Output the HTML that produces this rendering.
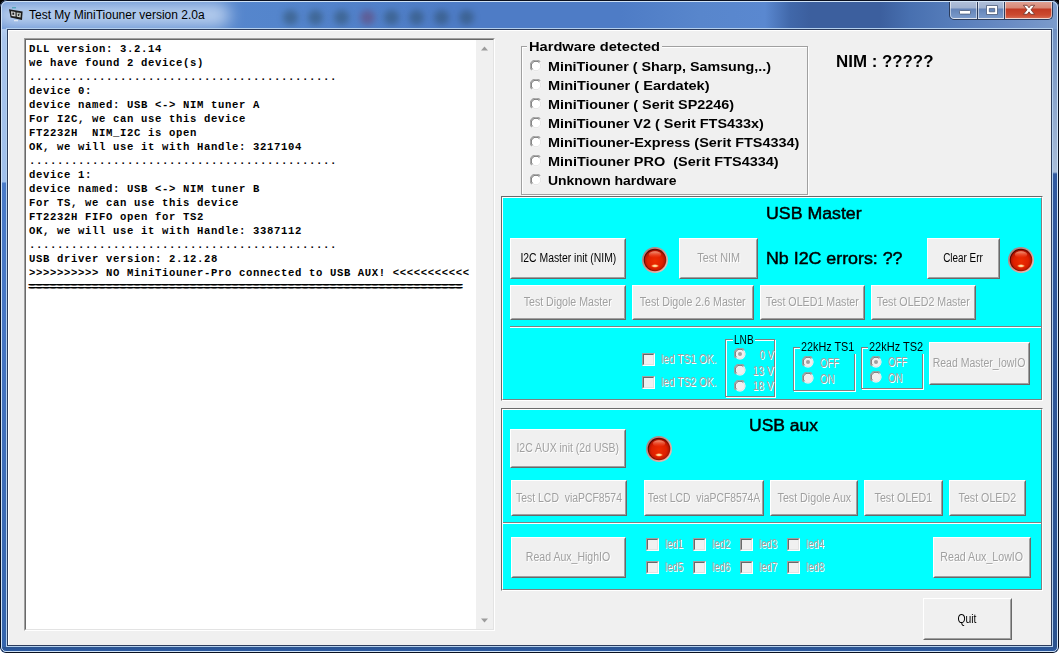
<!DOCTYPE html>
<html lang="en">
<head>
<meta charset="utf-8">
<title>Test My MiniTiouner version 2.0a</title>
<style>
html,body{margin:0;padding:0;}
body{width:1059px;height:653px;overflow:hidden;background:linear-gradient(#000 0,#000 50%,#fff 50%,#fff 100%);font-family:"Liberation Sans",sans-serif;}
#win{position:absolute;left:0;top:0;width:1059px;height:653px;overflow:hidden;border-radius:7px 7px 6px 6px;
 background:linear-gradient(90deg,#5d8bd0 0,#5485cc 280px,#4e7cc6 450px,#4e7cc6 620px,#5886cc 700px,#5a88d0 765px,#4168aa 790px,#3c5f9e 810px,#3c5f9e 880px,#4870b0 910px,#557cba 950px,#6a8cc4 1010px,#7c9ccc 1059px);}
#win .edge{position:absolute;left:0;top:0;right:0;bottom:0;border:1px solid #0a1020;border-radius:7px 7px 6px 6px;box-sizing:border-box;z-index:5;}
#win .edge2{position:absolute;left:1px;top:1px;right:1px;bottom:1px;border:1px solid #cfe2f6;border-radius:6px 6px 5px 5px;box-sizing:border-box;z-index:5;}
#sideL{position:absolute;left:2px;top:29px;width:4px;height:619px;background:linear-gradient(#a9c5ed 0,#9fbfeb 153px,#4a7bc9 154px,#4676c4 300px,#3464ac 619px);}
#sideR{position:absolute;left:1053px;top:29px;width:4px;height:619px;background:linear-gradient(#6f8fc0 0,#a9bdd9 143px,#31599f 145px,#2a528e 619px);}
#sideB{position:absolute;left:2px;top:647px;width:1055px;height:4px;background:linear-gradient(#2a528e,#2c5aa2);}
#glow{position:absolute;left:-6px;top:3px;width:236px;height:24px;border-radius:12px;background:rgba(236,244,255,.66);filter:blur(8px);}
.blob{position:absolute;top:10px;width:15px;height:15px;border-radius:50%;background:rgba(30,55,60,.36);filter:blur(3px);}
#icon{position:absolute;left:8px;top:7px;width:16px;height:16px;}
#title{position:absolute;left:29px;top:8px;font-size:12px;line-height:15px;color:#000;white-space:nowrap;}
#capb{position:absolute;left:949px;top:0;width:104px;height:20px;box-sizing:border-box;border:1px solid #2b3c5c;border-top:none;border-radius:0 0 5px 5px;overflow:hidden;}
#capb .cb{position:absolute;top:0;height:19px;box-sizing:border-box;border:1px solid rgba(255,255,255,.55);border-top:none;}
#capb .mn{left:0;width:27px;background:linear-gradient(#b4c2da 0,#a0b2d0 8px,#6484b8 9px,#7c9ccc 19px);border-radius:0 0 0 4px;}
#capb .mx{left:28px;width:26px;background:linear-gradient(#b4c2da 0,#a0b2d0 8px,#6484b8 9px,#7c9ccc 19px);}
#capb .cl{left:55px;width:47px;background:linear-gradient(#e2a89c 0,#d88876 8px,#c23a24 9px,#cc4a30 15px,#d8705a 19px);border-radius:0 0 4px 0;}
#capb .sep{position:absolute;top:0;width:1px;height:19px;background:#2b3c5c;}
#client{position:absolute;left:8px;top:30px;width:1043px;height:615px;background:#f0f0f0;box-shadow:inset 1px 1px 0 #fff;}
#cframe{position:absolute;left:6px;top:28px;width:1047px;height:619px;box-sizing:border-box;border:1px solid #b4d0ee;}
#cframe i{position:absolute;left:0;top:0;right:0;bottom:0;border:1px solid #2c3c5c;}
.abs{position:absolute;}
/* memo */
#memo{position:absolute;left:16px;top:8px;width:471px;height:593px;box-sizing:border-box;background:#fff;
 border:1px solid;border-color:#a0a0a0 #fff #fff #a0a0a0;}
#memo .in{position:absolute;left:0;top:0;right:0;bottom:0;border:1px solid;border-color:#696969 #e3e3e3 #e3e3e3 #696969;}
#memo pre{position:absolute;left:4px;top:3px;margin:0;font-family:"Liberation Mono",monospace;font-weight:bold;font-size:10.6px;letter-spacing:0.64px;line-height:14px;color:#000;}
#sb{position:absolute;right:1px;top:1px;bottom:1px;width:17px;background:#f0f0f0;}
/* classic button */
.btn{position:absolute;box-sizing:border-box;background:#f0f0f0;border:1px solid;border-color:#fff #696969 #696969 #fff;
 font-size:12px;color:#000;text-align:center;white-space:nowrap;}
.btn::after{content:"";position:absolute;left:0;top:0;right:0;bottom:0;border:1px solid;border-color:#f0f0f0 #a0a0a0 #a0a0a0 #f0f0f0;}
.btn>span{position:absolute;left:-40px;right:-40px;line-height:14px;}
.btn.dis{color:#a0a0a0;text-shadow:1px 1px 0 #fff;}
/* panel */
.panel{position:absolute;box-sizing:border-box;background:#00ffff;border:1px solid;border-color:#696969 #fff #fff #696969;}
.panel::after{content:"";position:absolute;left:0;top:0;right:0;bottom:0;border:1px solid;border-color:#fff #808080 #808080 #fff;pointer-events:none;}
.hdiv{position:absolute;height:0;border-top:1px solid #808080;border-bottom:1px solid #fff;}
.big{position:absolute;font-size:16px;line-height:20px;color:#000;white-space:nowrap;-webkit-text-stroke:0.45px #000;}
.led{position:absolute;width:26px;height:26px;}
/* group box */
.gb{position:absolute;box-sizing:border-box;border:1px solid #a0a0a0;box-shadow:1px 1px 0 #fff, inset 1px 1px 0 #fff;}
.gbl{position:absolute;white-space:nowrap;color:#000;}
.rad{position:absolute;width:12px;height:12px;}
.chk{position:absolute;width:13px;height:13px;box-sizing:border-box;background:#f0f0f0;border:1px solid;border-color:#a0a0a0 #fff #fff #a0a0a0;}
.chk::after{content:"";position:absolute;left:0;top:0;right:0;bottom:0;border:1px solid;border-color:#696969 #e3e3e3 #e3e3e3 #696969;}
.dl{position:absolute;font-size:12px;line-height:13px;color:#a0a0a0;text-shadow:1px 1px 0 #fff;white-space:nowrap;}
.hw{position:absolute;font-size:13px;font-weight:bold;line-height:16px;color:#000;white-space:nowrap;}
.hwl{font-size:13px;font-weight:bold;line-height:16px;background:#f0f0f0;padding:0 2px;}
.gbl.c{font-size:12px;line-height:13px;background:#00ffff;padding:0 1px;}
.gb.c{border-color:#808080;}
.nim{font-size:16px;font-weight:bold;line-height:20px;color:#000;white-space:nowrap;}
.sx{display:inline-block;white-space:nowrap;}
.eq{text-shadow:1px 0 0 #000,-1px 0 0 #000;}
</style>
</head>
<body>
<div id="win">
 <div class="edge"></div><div class="edge2"></div>
 <div id="sideL"></div><div id="sideR"></div><div id="sideB"></div>
 <div id="glow"></div>
 <div class="blob" style="left:283px"></div><div class="blob" style="left:308px"></div><div class="blob" style="left:334px"></div><div class="blob" style="left:360px;background:rgba(120,30,60,.34)"></div><div class="blob" style="left:384px"></div><div class="blob" style="left:409px"></div><div class="blob" style="left:434px"></div><div class="blob" style="left:459px"></div>
 <svg id="icon" viewBox="0 0 16 16"><path d="M4 .8h4" stroke="#3aa0b0" stroke-width="1"/><path d="M1 2.2 14.6 4.6 14 13 2.6 10.6z" fill="#1c1c1c"/><path d="M3 4.3 7.4 5.1 7.6 9.6 3.6 8.9z" fill="#d8d8d8"/><path d="M8.6 5.4 12.9 6.1 12.6 10.5 8.8 9.8z" fill="#c8ccc4"/><rect x="4.4" y="5.6" width="1.8" height="2.2" fill="#222"/><path d="M9.8 7 11.8 6.6 11 9 10 9z" fill="#333"/><path d="M6 13.6h4" stroke="#dfe8f4" stroke-width="1.2"/></svg>
 <div id="title">Test My MiniTiouner version 2.0a</div>
 <div id="capb"><div class="cb mn"></div><div class="sep" style="left:27px"></div><div class="cb mx"></div><div class="sep" style="left:54px"></div><div class="cb cl"></div>
  <svg style="position:absolute;left:0;top:0" width="104" height="20" viewBox="0 0 104 20">
   <rect x="9.5" y="10.5" width="11" height="3.6" rx=".8" fill="#fff" stroke="#4a5a78" stroke-width=".8"/>
   <path d="M36.5 5.5h11v9h-11z M39.3 8.4v3.4h5.4v-3.4z" fill="#fff" fill-rule="evenodd" stroke="#4a5a78" stroke-width=".8"/>
   <path d="M73.4 5.3h3.8l1.8 2.5 1.8-2.5h3.8l-3.6 4.5 3.6 4.5h-3.8l-1.8-2.5-1.8 2.5h-3.8l3.6-4.5z" fill="#fff" stroke="#6a3028" stroke-width=".8"/>
  </svg>
 </div>
 <div id="cframe"><i></i></div>
 <div id="client">
  <!-- MEMO -->
  <div id="memo"><div class="in"></div><div id="sb"><svg style="position:absolute;left:0;top:0" width="17" height="17" viewBox="0 0 17 17"><path d="M5 10.5 8.5 6.5 12 10.5z" fill="#9c9c9c"/></svg><svg style="position:absolute;left:0;bottom:0" width="17" height="17" viewBox="0 0 17 17"><path d="M5 6.5 8.5 10.5 12 6.5z" fill="#9c9c9c"/></svg></div>
<pre>DLL version: 3.2.14
we have found 2 device(s)
............................................
device 0:
device named: USB &lt;-&gt; NIM tuner A
For I2C, we can use this device
FT2232H  NIM_I2C is open
OK, we will use it with Handle: 3217104
............................................
device 1:
device named: USB &lt;-&gt; NIM tuner B
For TS, we can use this device
FT2232H FIFO open for TS2
OK, we will use it with Handle: 3387112
............................................
USB driver version: 2.12.28
&gt;&gt;&gt;&gt;&gt;&gt;&gt;&gt;&gt;&gt; NO MiniTiouner-Pro connected to USB AUX! &lt;&lt;&lt;&lt;&lt;&lt;&lt;&lt;&lt;&lt;&lt;
<span class="eq">==============================================================</span></pre>
  </div>
  <!-- HW -->
  <svg width="0" height="0" style="position:absolute"><defs><linearGradient id="lr" x1="0" y1="0" x2="1" y2="1"><stop offset="0" stop-color="#9a7878"/><stop offset=".5" stop-color="#d09a94"/><stop offset="1" stop-color="#f4c4bc"/></linearGradient><linearGradient id="ld" x1="0" y1="0" x2="1" y2="1"><stop offset="0" stop-color="#3c0400"/><stop offset=".5" stop-color="#7a0e00"/><stop offset="1" stop-color="#c02408"/></linearGradient><radialGradient id="lb" cx=".5" cy=".55" r=".55"><stop offset="0" stop-color="#ee2c00"/><stop offset=".65" stop-color="#de2000"/><stop offset=".9" stop-color="#b81400"/><stop offset="1" stop-color="#8c0c00"/></radialGradient><linearGradient id="lh" x1="0" y1="0" x2="0" y2="1"><stop offset="0" stop-color="#ffc0a0" stop-opacity=".8"/><stop offset="1" stop-color="#ff5030" stop-opacity="0"/></linearGradient><radialGradient id="ls"><stop offset="0" stop-color="#fffad8"/><stop offset=".55" stop-color="#ffc070" stop-opacity=".95"/><stop offset="1" stop-color="#ff5020" stop-opacity="0"/></radialGradient></defs></svg>
  <div class="gb" style="left:513px;top:16px;width:287px;height:149px"></div>
  <div class="gbl hwl" style="left:519px;top:9px;width:131px"><span class="sx" style="transform:scaleX(1.126);transform-origin:0 50%">Hardware detected</span></div>
  <svg class="rad" style="left:522px;top:30px" viewBox="0 0 12 12"><circle cx="6" cy="6" r="5.5" fill="#fff"/><path d="M1.8 10.2 A5.9 5.9 0 1 1 10.2 1.8" fill="none" stroke="#a0a0a0" stroke-width="1.1"/><circle cx="6" cy="6" r="4.6" fill="#fff"/><path d="M2.6 9.4 A4.8 4.8 0 1 1 9.4 2.6" fill="none" stroke="#696969" stroke-width="1"/><path d="M9.4 2.6 A4.8 4.8 0 0 1 2.6 9.4" fill="none" stroke="#e3e3e3" stroke-width="1"/></svg>
  <div class="hw" style="left:540px;top:29px"><span class="sx" style="transform:scaleX(1.100);transform-origin:0 50%">MiniTiouner ( Sharp, Samsung,..)</span></div>
  <svg class="rad" style="left:522px;top:49px" viewBox="0 0 12 12"><circle cx="6" cy="6" r="5.5" fill="#fff"/><path d="M1.8 10.2 A5.9 5.9 0 1 1 10.2 1.8" fill="none" stroke="#a0a0a0" stroke-width="1.1"/><circle cx="6" cy="6" r="4.6" fill="#fff"/><path d="M2.6 9.4 A4.8 4.8 0 1 1 9.4 2.6" fill="none" stroke="#696969" stroke-width="1"/><path d="M9.4 2.6 A4.8 4.8 0 0 1 2.6 9.4" fill="none" stroke="#e3e3e3" stroke-width="1"/></svg>
  <div class="hw" style="left:540px;top:48px"><span class="sx" style="transform:scaleX(1.120);transform-origin:0 50%">MiniTiouner ( Eardatek)</span></div>
  <svg class="rad" style="left:522px;top:68px" viewBox="0 0 12 12"><circle cx="6" cy="6" r="5.5" fill="#fff"/><path d="M1.8 10.2 A5.9 5.9 0 1 1 10.2 1.8" fill="none" stroke="#a0a0a0" stroke-width="1.1"/><circle cx="6" cy="6" r="4.6" fill="#fff"/><path d="M2.6 9.4 A4.8 4.8 0 1 1 9.4 2.6" fill="none" stroke="#696969" stroke-width="1"/><path d="M9.4 2.6 A4.8 4.8 0 0 1 2.6 9.4" fill="none" stroke="#e3e3e3" stroke-width="1"/></svg>
  <div class="hw" style="left:540px;top:67px"><span class="sx" style="transform:scaleX(1.107);transform-origin:0 50%">MiniTiouner ( Serit SP2246)</span></div>
  <svg class="rad" style="left:522px;top:87px" viewBox="0 0 12 12"><circle cx="6" cy="6" r="5.5" fill="#fff"/><path d="M1.8 10.2 A5.9 5.9 0 1 1 10.2 1.8" fill="none" stroke="#a0a0a0" stroke-width="1.1"/><circle cx="6" cy="6" r="4.6" fill="#fff"/><path d="M2.6 9.4 A4.8 4.8 0 1 1 9.4 2.6" fill="none" stroke="#696969" stroke-width="1"/><path d="M9.4 2.6 A4.8 4.8 0 0 1 2.6 9.4" fill="none" stroke="#e3e3e3" stroke-width="1"/></svg>
  <div class="hw" style="left:540px;top:86px"><span class="sx" style="transform:scaleX(1.108);transform-origin:0 50%">MiniTiouner V2 ( Serit FTS433x)</span></div>
  <svg class="rad" style="left:522px;top:106px" viewBox="0 0 12 12"><circle cx="6" cy="6" r="5.5" fill="#fff"/><path d="M1.8 10.2 A5.9 5.9 0 1 1 10.2 1.8" fill="none" stroke="#a0a0a0" stroke-width="1.1"/><circle cx="6" cy="6" r="4.6" fill="#fff"/><path d="M2.6 9.4 A4.8 4.8 0 1 1 9.4 2.6" fill="none" stroke="#696969" stroke-width="1"/><path d="M9.4 2.6 A4.8 4.8 0 0 1 2.6 9.4" fill="none" stroke="#e3e3e3" stroke-width="1"/></svg>
  <div class="hw" style="left:540px;top:105px"><span class="sx" style="transform:scaleX(1.109);transform-origin:0 50%">MiniTiouner-Express (Serit FTS4334)</span></div>
  <svg class="rad" style="left:522px;top:125px" viewBox="0 0 12 12"><circle cx="6" cy="6" r="5.5" fill="#fff"/><path d="M1.8 10.2 A5.9 5.9 0 1 1 10.2 1.8" fill="none" stroke="#a0a0a0" stroke-width="1.1"/><circle cx="6" cy="6" r="4.6" fill="#fff"/><path d="M2.6 9.4 A4.8 4.8 0 1 1 9.4 2.6" fill="none" stroke="#696969" stroke-width="1"/><path d="M9.4 2.6 A4.8 4.8 0 0 1 2.6 9.4" fill="none" stroke="#e3e3e3" stroke-width="1"/></svg>
  <div class="hw" style="left:540px;top:124px"><span class="sx" style="transform:scaleX(1.114);transform-origin:0 50%">MiniTiouner PRO &nbsp;(Serit FTS4334)</span></div>
  <svg class="rad" style="left:522px;top:144px" viewBox="0 0 12 12"><circle cx="6" cy="6" r="5.5" fill="#fff"/><path d="M1.8 10.2 A5.9 5.9 0 1 1 10.2 1.8" fill="none" stroke="#a0a0a0" stroke-width="1.1"/><circle cx="6" cy="6" r="4.6" fill="#fff"/><path d="M2.6 9.4 A4.8 4.8 0 1 1 9.4 2.6" fill="none" stroke="#696969" stroke-width="1"/><path d="M9.4 2.6 A4.8 4.8 0 0 1 2.6 9.4" fill="none" stroke="#e3e3e3" stroke-width="1"/></svg>
  <div class="hw" style="left:540px;top:143px"><span class="sx" style="transform:scaleX(1.072);transform-origin:0 50%">Unknown hardware</span></div>
  <div class="abs nim" style="left:828px;top:22px"><span class="sx" style="transform:scaleX(1.055);transform-origin:0 50%">NIM : ?????</span></div>
  <!-- PANELS -->
  <div class="panel" style="left:493px;top:166px;width:542px;height:205px">
   <div class="big" style="left:264px;top:7px"><span class="sx" style="transform:scaleX(1.109);transform-origin:0 50%">USB Master</span></div>
   <div class="btn" style="left:8px;top:41px;width:116px;height:41px"><span style="top:12px"><span class="sx" style="transform:scaleX(0.866);transform-origin:50% 50%">I2C Master init (NIM)</span></span></div>
   <svg class="led" style="left:140px;top:50px" viewBox="0 0 26 26"><circle cx="13" cy="13" r="13" fill="url(#lr)"/><circle cx="13" cy="13" r="11.3" fill="url(#ld)"/><circle cx="13" cy="13" r="10.3" fill="url(#lb)"/><ellipse cx="13" cy="7.6" rx="6.2" ry="3.4" fill="url(#lh)"/><ellipse cx="13" cy="18.9" rx="4.3" ry="2" fill="url(#ls)"/></svg>
   <div class="btn dis" style="left:177px;top:41px;width:79px;height:41px"><span style="top:12px"><span class="sx" style="transform:scaleX(0.904);transform-origin:50% 50%">Test NIM</span></span></div>
   <div class="big" style="left:264px;top:52px"><span class="sx" style="transform:scaleX(1.112);transform-origin:0 50%">Nb I2C errors: ??</span></div>
   <div class="btn" style="left:425px;top:41px;width:73px;height:41px"><span style="top:12px"><span class="sx" style="transform:scaleX(0.825);transform-origin:50% 50%">Clear Err</span></span></div>
   <svg class="led" style="left:506px;top:50px" viewBox="0 0 26 26"><circle cx="13" cy="13" r="13" fill="url(#lr)"/><circle cx="13" cy="13" r="11.3" fill="url(#ld)"/><circle cx="13" cy="13" r="10.3" fill="url(#lb)"/><ellipse cx="13" cy="7.6" rx="6.2" ry="3.4" fill="url(#lh)"/><ellipse cx="13" cy="18.9" rx="4.3" ry="2" fill="url(#ls)"/></svg>
   <div class="btn dis" style="left:8px;top:88px;width:116px;height:35px"><span style="top:9px"><span class="sx" style="transform:scaleX(0.886);transform-origin:50% 50%">Test Digole Master</span></span></div>
   <div class="btn dis" style="left:130px;top:88px;width:122px;height:35px"><span style="top:9px"><span class="sx" style="transform:scaleX(0.886);transform-origin:50% 50%">Test Digole 2.6 Master</span></span></div>
   <div class="btn dis" style="left:258px;top:88px;width:105px;height:35px"><span style="top:9px"><span class="sx" style="transform:scaleX(0.888);transform-origin:50% 50%">Test OLED1 Master</span></span></div>
   <div class="btn dis" style="left:369px;top:88px;width:105px;height:35px"><span style="top:9px"><span class="sx" style="transform:scaleX(0.888);transform-origin:50% 50%">Test OLED2 Master</span></span></div>
   <div class="hdiv" style="left:8px;top:129px;width:531px"></div>
   <div class="chk" style="left:140px;top:156px"></div><div class="dl" style="left:159px;top:156px"><span class="sx" style="transform:scaleX(0.852);transform-origin:0 50%">led TS1 OK.</span></div>
   <div class="chk" style="left:140px;top:179px"></div><div class="dl" style="left:159px;top:179px"><span class="sx" style="transform:scaleX(0.852);transform-origin:0 50%">led TS2 OK.</span></div>
   <div class="gb c" style="left:223px;top:142px;width:50px;height:58px"></div><div class="gbl c" style="left:231px;top:137px;width:20px"><span class="sx" style="transform:scaleX(0.840);transform-origin:0 50%">LNB</span></div>
   <div class="gb c" style="left:291px;top:150px;width:62px;height:44px"></div><div class="gbl c" style="left:298px;top:144px;width:54px"><span class="sx" style="transform:scaleX(0.901);transform-origin:0 50%">22kHz TS1</span></div>
   <div class="gb c" style="left:359px;top:150px;width:62px;height:42px"></div><div class="gbl c" style="left:366px;top:144px;width:54px"><span class="sx" style="transform:scaleX(0.915);transform-origin:0 50%">22kHz TS2</span></div>
   <svg class="rad" style="left:232px;top:151px" viewBox="0 0 12 12"><circle cx="6" cy="6" r="5.5" fill="#fff"/><path d="M1.8 10.2 A5.9 5.9 0 1 1 10.2 1.8" fill="none" stroke="#a0a0a0" stroke-width="1.1"/><circle cx="6" cy="6" r="4.6" fill="#f0f0f0"/><path d="M2.6 9.4 A4.8 4.8 0 1 1 9.4 2.6" fill="none" stroke="#696969" stroke-width="1"/><path d="M9.4 2.6 A4.8 4.8 0 0 1 2.6 9.4" fill="none" stroke="#e3e3e3" stroke-width="1"/><circle cx="6" cy="6" r="2" fill="#a0a0a0"/></svg><div class="dl" style="left:232px;top:152px;width:40px;text-align:right"><span class="sx" style="transform:scaleX(0.805);transform-origin:100% 50%">0 V</span></div>
   <svg class="rad" style="left:232px;top:167px" viewBox="0 0 12 12"><circle cx="6" cy="6" r="5.5" fill="#fff"/><path d="M1.8 10.2 A5.9 5.9 0 1 1 10.2 1.8" fill="none" stroke="#a0a0a0" stroke-width="1.1"/><circle cx="6" cy="6" r="4.6" fill="#f0f0f0"/><path d="M2.6 9.4 A4.8 4.8 0 1 1 9.4 2.6" fill="none" stroke="#696969" stroke-width="1"/><path d="M9.4 2.6 A4.8 4.8 0 0 1 2.6 9.4" fill="none" stroke="#e3e3e3" stroke-width="1"/></svg><div class="dl" style="left:232px;top:168px;width:40px;text-align:right"><span class="sx" style="transform:scaleX(0.851);transform-origin:100% 50%">13 V</span></div>
   <svg class="rad" style="left:232px;top:183px" viewBox="0 0 12 12"><circle cx="6" cy="6" r="5.5" fill="#fff"/><path d="M1.8 10.2 A5.9 5.9 0 1 1 10.2 1.8" fill="none" stroke="#a0a0a0" stroke-width="1.1"/><circle cx="6" cy="6" r="4.6" fill="#f0f0f0"/><path d="M2.6 9.4 A4.8 4.8 0 1 1 9.4 2.6" fill="none" stroke="#696969" stroke-width="1"/><path d="M9.4 2.6 A4.8 4.8 0 0 1 2.6 9.4" fill="none" stroke="#e3e3e3" stroke-width="1"/></svg><div class="dl" style="left:232px;top:183px;width:40px;text-align:right"><span class="sx" style="transform:scaleX(0.851);transform-origin:100% 50%">18 V</span></div>
   <svg class="rad" style="left:300px;top:159px" viewBox="0 0 12 12"><circle cx="6" cy="6" r="5.5" fill="#fff"/><path d="M1.8 10.2 A5.9 5.9 0 1 1 10.2 1.8" fill="none" stroke="#a0a0a0" stroke-width="1.1"/><circle cx="6" cy="6" r="4.6" fill="#f0f0f0"/><path d="M2.6 9.4 A4.8 4.8 0 1 1 9.4 2.6" fill="none" stroke="#696969" stroke-width="1"/><path d="M9.4 2.6 A4.8 4.8 0 0 1 2.6 9.4" fill="none" stroke="#e3e3e3" stroke-width="1"/><circle cx="6" cy="6" r="2" fill="#a0a0a0"/></svg><div class="dl" style="left:318px;top:160px"><span class="sx" style="transform:scaleX(0.792);transform-origin:0 50%">OFF</span></div>
   <svg class="rad" style="left:300px;top:175px" viewBox="0 0 12 12"><circle cx="6" cy="6" r="5.5" fill="#fff"/><path d="M1.8 10.2 A5.9 5.9 0 1 1 10.2 1.8" fill="none" stroke="#a0a0a0" stroke-width="1.1"/><circle cx="6" cy="6" r="4.6" fill="#f0f0f0"/><path d="M2.6 9.4 A4.8 4.8 0 1 1 9.4 2.6" fill="none" stroke="#696969" stroke-width="1"/><path d="M9.4 2.6 A4.8 4.8 0 0 1 2.6 9.4" fill="none" stroke="#e3e3e3" stroke-width="1"/></svg><div class="dl" style="left:318px;top:176px"><span class="sx" style="transform:scaleX(0.806);transform-origin:0 50%">ON</span></div>
   <svg class="rad" style="left:368px;top:159px" viewBox="0 0 12 12"><circle cx="6" cy="6" r="5.5" fill="#fff"/><path d="M1.8 10.2 A5.9 5.9 0 1 1 10.2 1.8" fill="none" stroke="#a0a0a0" stroke-width="1.1"/><circle cx="6" cy="6" r="4.6" fill="#f0f0f0"/><path d="M2.6 9.4 A4.8 4.8 0 1 1 9.4 2.6" fill="none" stroke="#696969" stroke-width="1"/><path d="M9.4 2.6 A4.8 4.8 0 0 1 2.6 9.4" fill="none" stroke="#e3e3e3" stroke-width="1"/><circle cx="6" cy="6" r="2" fill="#a0a0a0"/></svg><div class="dl" style="left:386px;top:159px"><span class="sx" style="transform:scaleX(0.792);transform-origin:0 50%">OFF</span></div>
   <svg class="rad" style="left:368px;top:174px" viewBox="0 0 12 12"><circle cx="6" cy="6" r="5.5" fill="#fff"/><path d="M1.8 10.2 A5.9 5.9 0 1 1 10.2 1.8" fill="none" stroke="#a0a0a0" stroke-width="1.1"/><circle cx="6" cy="6" r="4.6" fill="#f0f0f0"/><path d="M2.6 9.4 A4.8 4.8 0 1 1 9.4 2.6" fill="none" stroke="#696969" stroke-width="1"/><path d="M9.4 2.6 A4.8 4.8 0 0 1 2.6 9.4" fill="none" stroke="#e3e3e3" stroke-width="1"/></svg><div class="dl" style="left:386px;top:175px"><span class="sx" style="transform:scaleX(0.806);transform-origin:0 50%">ON</span></div>
   <div class="btn dis" style="left:427px;top:145px;width:101px;height:43px"><span style="top:13px"><span class="sx" style="transform:scaleX(0.875);transform-origin:50% 50%">Read Master_lowIO</span></span></div>
  </div>
  <div class="panel" style="left:493px;top:378px;width:542px;height:183px">
   <div class="big" style="left:247px;top:7px"><span class="sx" style="transform:scaleX(1.093);transform-origin:0 50%">USB aux</span></div>
   <div class="btn dis" style="left:8px;top:20px;width:116px;height:39px"><span style="top:11px"><span class="sx" style="transform:scaleX(0.873);transform-origin:50% 50%">I2C AUX init (2d USB)</span></span></div>
   <svg class="led" style="left:144px;top:27px" viewBox="0 0 26 26"><circle cx="13" cy="13" r="13" fill="url(#lr)"/><circle cx="13" cy="13" r="11.3" fill="url(#ld)"/><circle cx="13" cy="13" r="10.3" fill="url(#lb)"/><ellipse cx="13" cy="7.6" rx="6.2" ry="3.4" fill="url(#lh)"/><ellipse cx="13" cy="18.9" rx="4.3" ry="2" fill="url(#ls)"/></svg>
   <div class="btn dis" style="left:9px;top:71px;width:116px;height:36px"><span style="top:10px"><span class="sx" style="transform:scaleX(0.867);transform-origin:50% 50%">Test LCD &nbsp;viaPCF8574</span></span></div>
   <div class="btn dis" style="left:142px;top:71px;width:120px;height:36px"><span style="top:10px"><span class="sx" style="transform:scaleX(0.864);transform-origin:50% 50%">Test LCD &nbsp;viaPCF8574A</span></span></div>
   <div class="btn dis" style="left:268px;top:71px;width:88px;height:36px"><span style="top:10px"><span class="sx" style="transform:scaleX(0.890);transform-origin:50% 50%">Test Digole Aux</span></span></div>
   <div class="btn dis" style="left:362px;top:71px;width:79px;height:36px"><span style="top:10px"><span class="sx" style="transform:scaleX(0.889);transform-origin:50% 50%">Test OLED1</span></span></div>
   <div class="btn dis" style="left:447px;top:71px;width:77px;height:36px"><span style="top:10px"><span class="sx" style="transform:scaleX(0.889);transform-origin:50% 50%">Test OLED2</span></span></div>
   <div class="hdiv" style="left:1px;top:113px;width:538px"></div>
   <div class="btn dis" style="left:9px;top:128px;width:115px;height:41px"><span style="top:12px"><span class="sx" style="transform:scaleX(0.878);transform-origin:50% 50%">Read Aux_HighIO</span></span></div>
   <div class="chk" style="left:144px;top:129px"></div><div class="dl" style="left:163px;top:129px"><span class="sx" style="transform:scaleX(0.802);transform-origin:0 50%">led1</span></div>
   <div class="chk" style="left:191px;top:129px"></div><div class="dl" style="left:210px;top:129px"><span class="sx" style="transform:scaleX(0.802);transform-origin:0 50%">led2</span></div>
   <div class="chk" style="left:238px;top:129px"></div><div class="dl" style="left:257px;top:129px"><span class="sx" style="transform:scaleX(0.802);transform-origin:0 50%">led3</span></div>
   <div class="chk" style="left:285px;top:129px"></div><div class="dl" style="left:304px;top:129px"><span class="sx" style="transform:scaleX(0.802);transform-origin:0 50%">led4</span></div>
   <div class="chk" style="left:144px;top:152px"></div><div class="dl" style="left:163px;top:152px"><span class="sx" style="transform:scaleX(0.802);transform-origin:0 50%">led5</span></div>
   <div class="chk" style="left:191px;top:152px"></div><div class="dl" style="left:210px;top:152px"><span class="sx" style="transform:scaleX(0.802);transform-origin:0 50%">led6</span></div>
   <div class="chk" style="left:238px;top:152px"></div><div class="dl" style="left:257px;top:152px"><span class="sx" style="transform:scaleX(0.802);transform-origin:0 50%">led7</span></div>
   <div class="chk" style="left:285px;top:152px"></div><div class="dl" style="left:304px;top:152px"><span class="sx" style="transform:scaleX(0.802);transform-origin:0 50%">led8</span></div>
   <div class="btn dis" style="left:431px;top:128px;width:98px;height:41px"><span style="top:12px"><span class="sx" style="transform:scaleX(0.886);transform-origin:50% 50%">Read Aux_LowIO</span></span></div>
  </div>
  <div class="btn" style="left:915px;top:568px;width:89px;height:42px"><span style="top:13px"><span class="sx" style="transform:scaleX(0.863);transform-origin:50% 50%">Quit</span></span></div>
  <!-- /PANELS -->
 </div>
</div>
</body>
</html>
